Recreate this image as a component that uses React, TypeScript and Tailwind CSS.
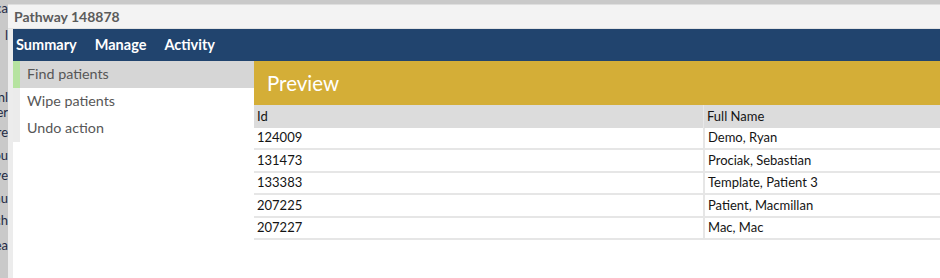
import React from "react";

const rows = [
  ["124009", "Demo, Ryan"],
  ["131473", "Prociak, Sebastian"],
  ["133383", "Template, Patient 3"],
  ["207225", "Patient, Macmillan"],
  ["207227", "Mac, Mac"],
];

const frags: [number, string][] = [
  [0, "Loca"],
  [27, "l"],
  [89, "Penl"],
  [104, "over"],
  [124, "tre"],
  [147, "You"],
  [167, "ave"],
  [190, "mu"],
  [212, "ch"],
  [237, "ea"],
];

export default function App() {
  return (
    <div
      className="flex w-[940px] h-[278px] bg-[#c9c9c9] overflow-hidden"
      style={{ fontFamily: "Lato, 'Open Sans', sans-serif" }}
    >
      {/* background window fragments */}
      <div className="relative w-[8px] shrink-0 overflow-hidden text-[13px] text-[#1e2a44]">
        {frags.map(([top, t], i) => (
          <div
            key={i}
            className="absolute right-0 flex justify-end whitespace-nowrap leading-[16px]"
            style={{ top }}
          >
            {t}
          </div>
        ))}
      </div>

      {/* window */}
      <div className="flex flex-col flex-1 mt-[4px] bg-[#ececec] border-t border-[#dedede]">
        <div className="h-[24px] bg-[#f3f3f3] flex items-center pl-[6px] text-[14px] font-bold text-[#5b5b5b] border-b border-[#e2e2e2]">
          Pathway 148878
        </div>
        <div className="flex flex-col flex-1 pl-[5px]">
          <div className="h-[32px] bg-[#21446e] flex items-center gap-[18px] pl-[3px] text-[14.5px] font-bold text-white">
            <span>Summary</span>
            <span>Manage</span>
            <span>Activity</span>
          </div>
          <div className="flex flex-1">
            {/* left menu */}
            <div className="w-[241px] bg-white flex flex-col">
              {[
                ["Find patients", true],
                ["Wipe patients", false],
                ["Undo action", false],
              ].map(([label, active], i) => (
                <div key={i} className="flex h-[27px]">
                  <div className={`w-[7px] ${active ? "bg-[#b6e3a0]" : "bg-[#ebebeb]"}`} />
                  <div
                    className={`flex-1 flex items-center pl-[7px] pb-[1px] text-[14.3px] text-[#575757] ${
                      active ? "bg-[#d6d6d6]" : "bg-white"
                    }`}
                  >
                    {label as string}
                  </div>
                </div>
              ))}
            </div>
            {/* main */}
            <div className="flex-1 bg-white flex flex-col">
              <div className="h-[44px] bg-[#d4ae37] flex items-center pl-[13px] text-[20.5px] text-white">
                Preview
              </div>
              <div className="flex h-[23px] bg-[#dcdcdc] text-[13px] text-[#141414] items-center">
                <div className="w-[449px] pl-[3px]">Id</div>
                <div className="flex-1 pl-[3px] border-l border-[#e8e8e8] h-full flex items-center">Full Name</div>
              </div>
              {rows.map(([id, name]) => (
                <div
                  key={id}
                  className="flex h-[22.4px] border-b-2 border-[#e6e6e6] text-[13px] text-[#141414] items-center"
                >
                  <div className="w-[449px] pl-[3px]">{id}</div>
                  <div className="flex-1 pl-[3px] border-l-2 border-[#e6e6e6] h-full flex items-center">{name}</div>
                </div>
              ))}
            </div>
          </div>
        </div>
      </div>
    </div>
  );
}
